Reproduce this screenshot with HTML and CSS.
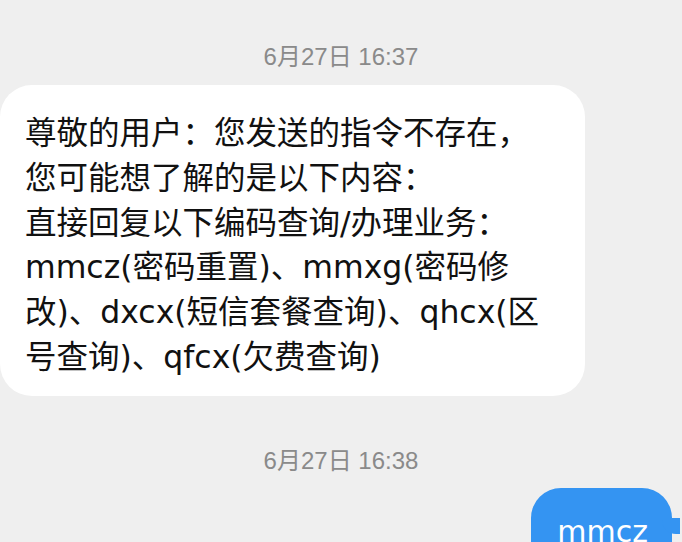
FILE: index.html
```html
<!DOCTYPE html>
<html lang="zh-CN">
<head>
    <meta charset="UTF-8">
    <meta name="viewport" content="width=device-width, initial-scale=1.0">
    <title>短信</title>
    <link rel="stylesheet" href="styles.css">
</head>
<body>
    <div class="thread">
        <div class="time">6月27日 16:37</div>

        <div class="bubble incoming">
            <span class="line">尊敬的用户：您发送的指令不存在，</span>
            <span class="line">您可能想了解的是以下内容：</span>
            <span class="line">直接回复以下编码查询/办理业务：</span>
            <span class="line">mmcz(密码重置)、mmxg(密码修</span>
            <span class="line">改)、dxcx(短信套餐查询)、qhcx(区</span>
            <span class="line">号查询)、qfcx(欠费查询)</span>
        </div>

        <div class="time later">6月27日 16:38</div>

        <div class="row-out">
            <div class="bubble outgoing">mmcz</div>
        </div>
    </div>
</body>
</html>
```

FILE: styles.css
```css
/* Reset */
* {
    margin: 0;
    padding: 0;
    box-sizing: border-box;
}

body {
    font-family: 'DejaVu Sans', 'Noto Sans CJK SC', sans-serif;
    background-color: #efefef;
    color: #111;
    overflow: hidden;
    height: 542px;
}

.thread {
    display: flex;
    flex-direction: column;
    padding-top: 42px;
}

.time {
    text-align: center;
    font-family: 'Liberation Sans', 'Noto Sans CJK SC', sans-serif;
    font-size: 24px;
    line-height: 30px;
    color: #8a8a8a;
}

.time.later {
    margin-top: 50px;
}

.bubble {
    font-size: 31.5px;
    line-height: 44.8px;
}

.incoming {
    align-self: flex-start;
    width: 585px;
    margin-top: 13px;
    padding: 26px 20px 16px 25px;
    background-color: #ffffff;
    border-radius: 32px;
}

.line {
    display: block;
    white-space: nowrap;
}

.row-out {
    display: flex;
    justify-content: flex-end;
    margin-top: 12px;
    padding-right: 10px;
}

.outgoing {
    position: relative;
    background-color: #3494f2;
    color: #ffffff;
    font-size: 30px;
    padding: 22px 24px 24px 26px;
    border-radius: 30px;
}

/* little tail on the right */
.outgoing::after {
    content: '';
    position: absolute;
    right: -8px;
    top: 30px;
    width: 18px;
    height: 16px;
    background-color: #3494f2;
    border-radius: 0 0 0 14px;
}
```
